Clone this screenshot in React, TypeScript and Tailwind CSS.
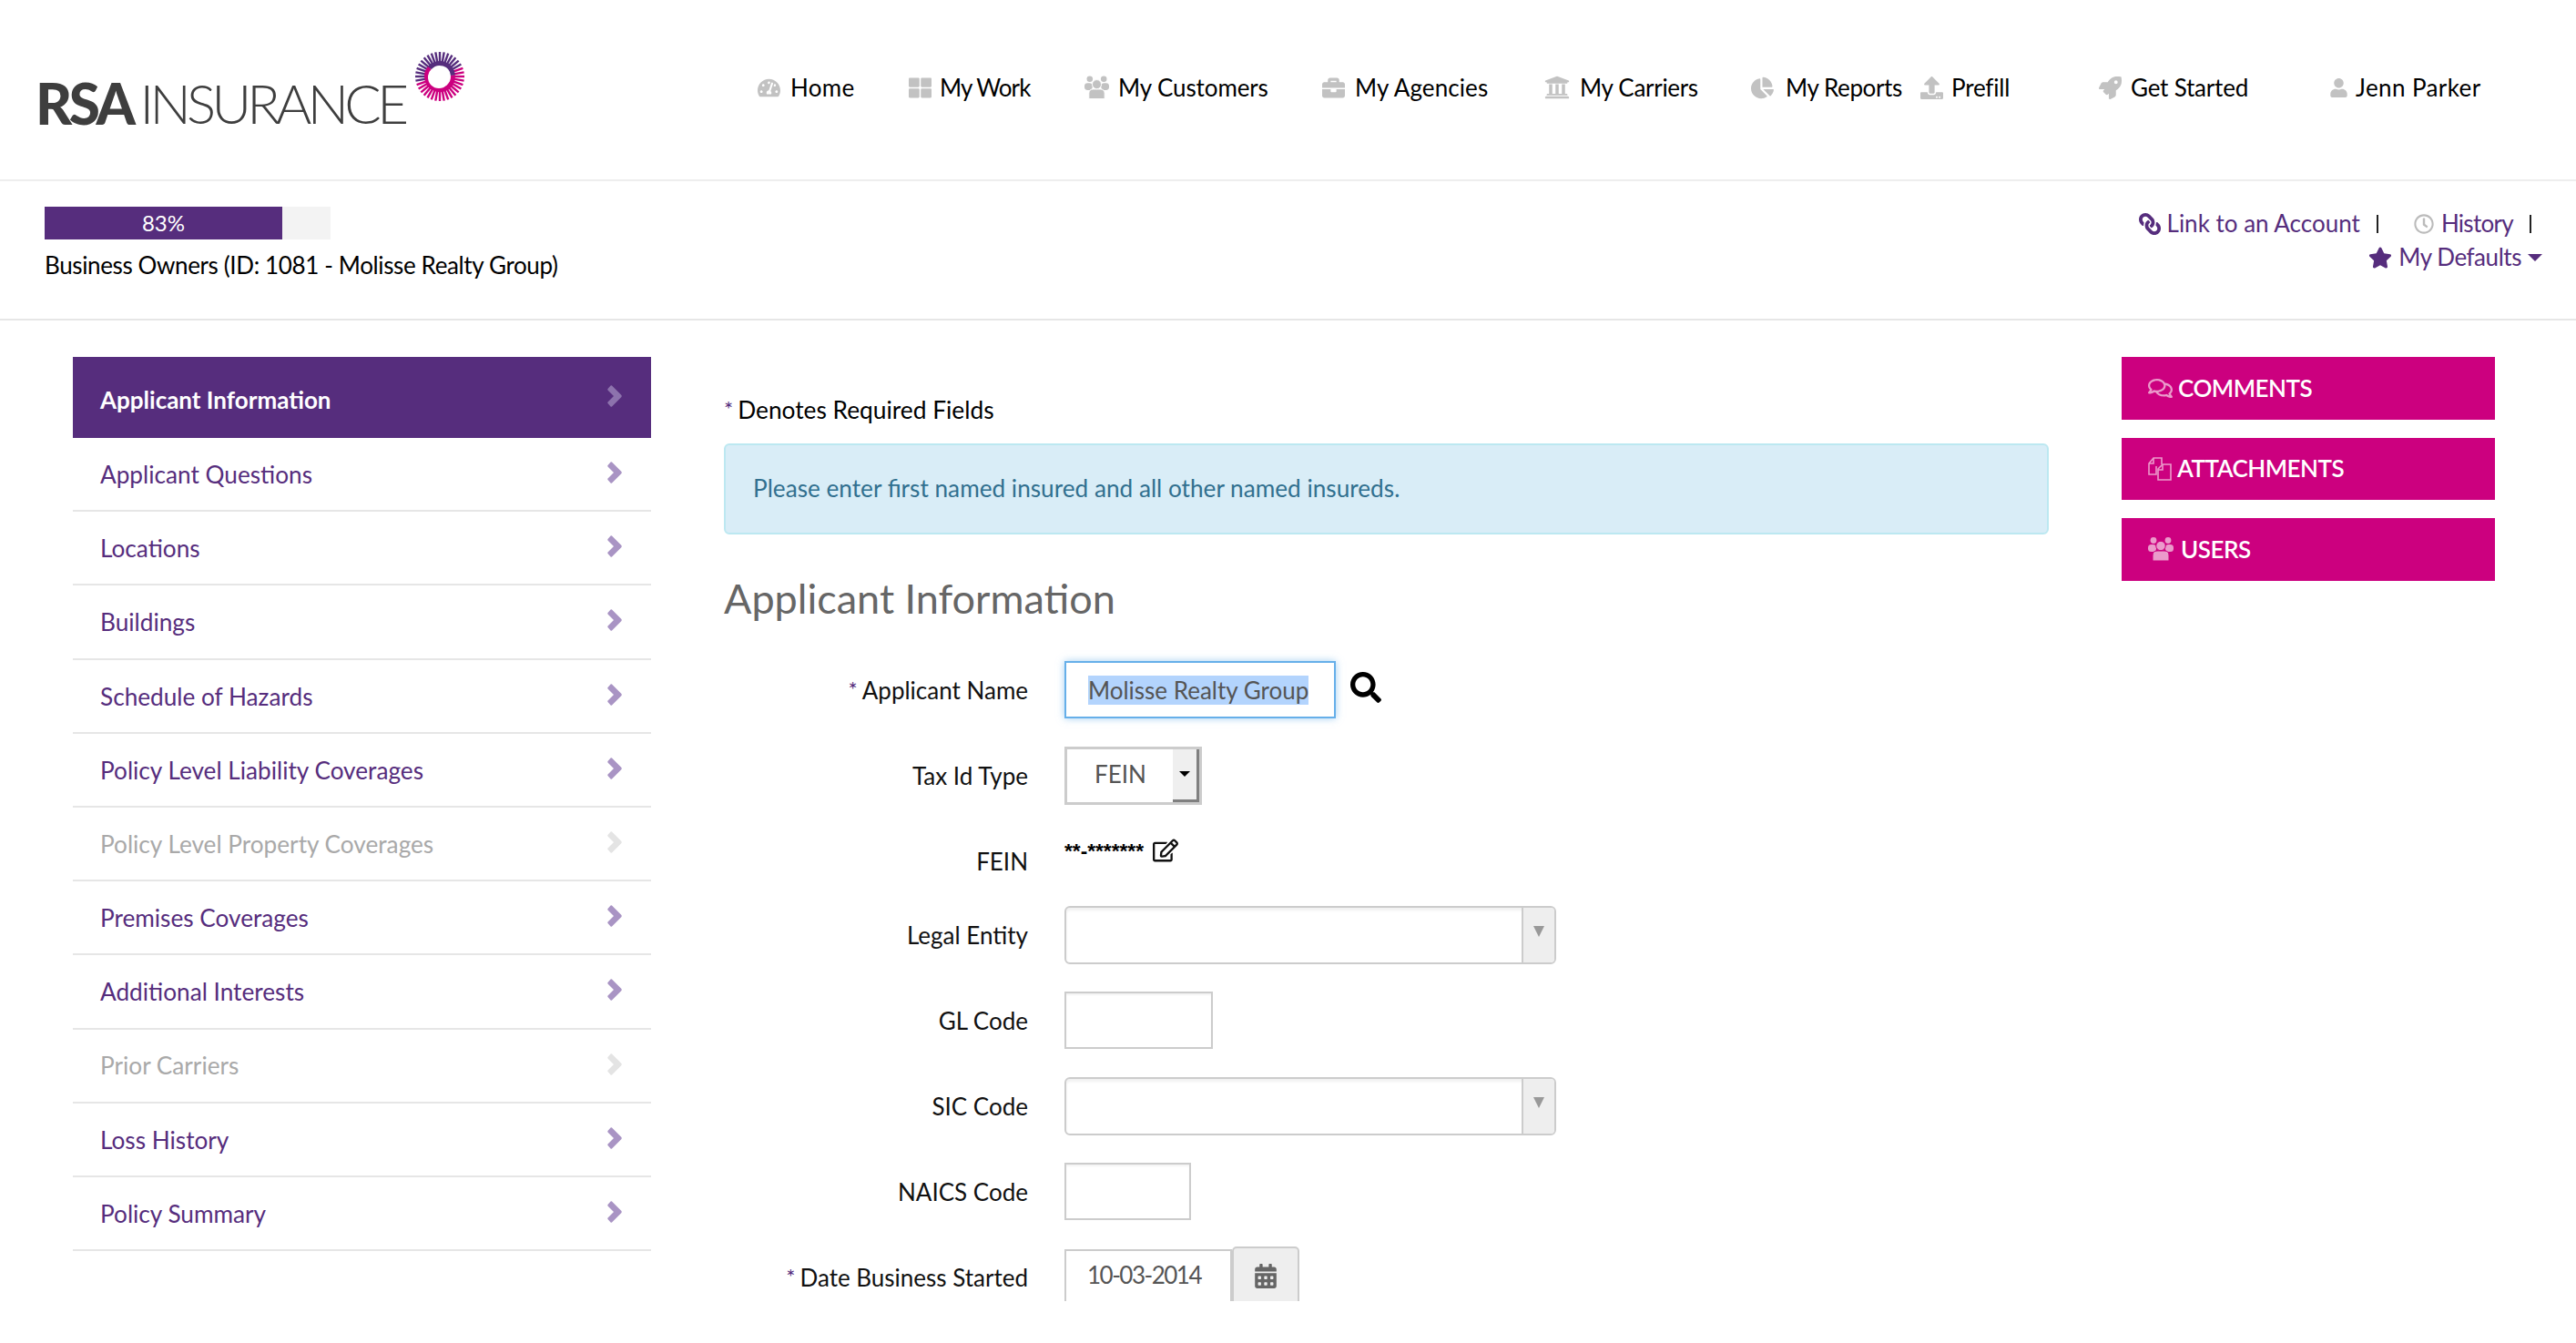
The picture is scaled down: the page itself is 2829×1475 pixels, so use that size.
import type { ReactNode } from "react";
import {
  FaTachometerAlt,
  FaThLarge,
  FaBriefcase,
  FaUniversity,
  FaChartPie,
  FaUpload,
  FaRocket,
  FaUser,
  FaLink,
  FaRegClock,
  FaStar,
  FaSearch,
  FaRegEdit,
  FaRegComments,
  FaCalendarAlt,
} from "react-icons/fa";

function UsersIcon({ className, gap }: { className: string; gap: string }) {
  return (
    <svg viewBox="0 0 28 26" className={className} fill="currentColor">
      <circle cx="6" cy="3.5" r="3.4" />
      <circle cx="22" cy="3.5" r="3.4" />
      <rect x="0" y="8" width="9" height="8" rx="3.5" />
      <rect x="19" y="8" width="9" height="8" rx="3.5" />
      <path d="M5 26 V20 Q5 15 10 15 H18 Q23 15 23 20 V26 Z" stroke={gap} strokeWidth="1" />
      <circle cx="14" cy="9.5" r="5.2" stroke={gap} strokeWidth="1" />
    </svg>
  );
}

function NavUsers({ className }: { className?: string }) {
  return <UsersIcon className={className ?? ""} gap="#ffffff" />;
}

const navItems = [
  { label: "Home", icon: FaTachometerAlt, width: "w-[166px]", icon_cls: "w-[25px] h-[25px] mr-[11px]", track: "tracking-[0.3px]" },
  { label: "My Work", icon: FaThLarge, width: "w-[193px]", icon_cls: "w-[25px] h-[25px] mr-[9px]", track: "tracking-[-0.9px]" },
  { label: "My Customers", icon: NavUsers, width: "w-[261px]", icon_cls: "w-[27px] h-[26px] mr-[10px]", track: "tracking-[-0.1px]" },
  { label: "My Agencies", icon: FaBriefcase, width: "w-[244px]", icon_cls: "w-[25px] h-[25px] mr-[11px]", track: "tracking-[0.1px]" },
  { label: "My Carriers", icon: FaUniversity, width: "w-[227px]", icon_cls: "w-[28px] h-[28px] mr-[11px]", track: "tracking-[-0.3px]" },
  { label: "My Reports", icon: FaChartPie, width: "w-[186px]", icon_cls: "w-[25px] h-[25px] mr-[13px]", track: "tracking-[-0.4px]" },
  { label: "Prefill", icon: FaUpload, width: "w-[196px]", icon_cls: "w-[25px] h-[25px] mr-[9px]", track: "tracking-[-0.2px]" },
  { label: "Get Started", icon: FaRocket, width: "w-[253px]", icon_cls: "w-[25px] h-[25px] mr-[10px]", track: "tracking-[-0.2px]" },
  { label: "Jenn Parker", icon: FaUser, width: "w-[170px]", icon_cls: "w-[21px] h-[21px] mr-[8px]", track: "tracking-[0.4px]" },
];

const sideItems = [
  { label: "Applicant Questions" },
  { label: "Locations" },
  { label: "Buildings" },
  { label: "Schedule of Hazards" },
  { label: "Policy Level Liability Coverages" },
  { label: "Policy Level Property Coverages", disabled: true },
  { label: "Premises Coverages" },
  { label: "Additional Interests" },
  { label: "Prior Carriers", disabled: true },
  { label: "Loss History" },
  { label: "Policy Summary" },
];

function LogoMark() {
  const rays = Array.from({ length: 36 }, (_, i) => (i * 360) / 36);
  return (
    <svg viewBox="-28 -28 56 56" className="w-[56px] h-[56px]">
      {rays.map((deg) => {
        const rad = (deg * Math.PI) / 180;
        const purple = deg >= 255 || deg < 70;
        return (
          <line
            key={deg}
            x1={Math.sin(rad) * 14}
            y1={-Math.cos(rad) * 14}
            x2={Math.sin(rad) * 27}
            y2={-Math.cos(rad) * 27}
            stroke={purple ? "#562d7d" : "#cc007f"}
            strokeWidth="2.4"
          />
        );
      })}
      <path d="M-11.1 -9.3 A14.5 14.5 0 0 1 14.4 -1.3" fill="none" stroke="#562d7d" strokeWidth="5" />
      <path d="M14.4 -1.3 A14.5 14.5 0 1 1 -11.1 -9.3" fill="none" stroke="#cc007f" strokeWidth="5" />
      <circle cx="-1" cy="1" r="12" fill="white" />
    </svg>
  );
}

function Chevron({ className }: { className: string }) {
  return (
    <svg viewBox="0 0 16 24" className={`w-[16px] h-[24px] ${className}`} fill="currentColor">
      <path d="M5 0.5 L15.5 11 Q16 12 15.5 13 L5 23.5 Q4.3 24 3.6 23.5 L0.5 20 Q0 19.3 0.5 18.6 L7 12 L0.5 5.4 Q0 4.7 0.5 4 L3.6 0.5 Q4.3 0 5 0.5 Z" />
    </svg>
  );
}

function AttachIcon() {
  return (
    <svg viewBox="0 0 26 26" className="w-[26px] h-[26px]" fill="none" stroke="#eb9acb" strokeWidth="1.6">
      <path d="M9 10 V19 H1 V7 L6 1 H15 V8" />
      <path d="M6 1 V7 H1" />
      <path d="M11 25 V13 L16 8 H25 V25 Z" />
      <path d="M16 8 V14 H11" />
    </svg>
  );
}

function FormRow({ label, required, children, className }: { label: string; required?: boolean; children: ReactNode; className: string }) {
  return (
    <div className={`flex items-center ${className}`}>
      <div className="w-[334px] text-right text-[26px] leading-none text-[#111] whitespace-nowrap">
        {required && <span className="text-[#562d7d] text-[24px] align-[2px] mr-[5px]">*</span>}
        {label}
      </div>
      <div className="ml-[40px] flex items-center">{children}</div>
    </div>
  );
}

function ComboBox() {
  return (
    <div className="w-[540px] h-[64px] flex rounded-[6px] border-2 border-[#ccc] bg-white shadow-[inset_0_3px_3px_rgba(0,0,0,0.06)] overflow-hidden">
      <div className="flex-1" />
      <div className="w-[36px] bg-[#eee] border-l-2 border-[#ccc] flex justify-center pt-[20px]">
        <div className="w-0 h-0 border-l-[6px] border-r-[6px] border-t-[12px] border-l-transparent border-r-transparent border-t-[#999]" />
      </div>
    </div>
  );
}

function TextBox({ width }: { width: string }) {
  return <div className={`${width} h-[63px] border-2 border-[#ccc] bg-white shadow-[inset_0_2px_2px_rgba(0,0,0,0.05)]`} />;
}

function ActionButton({ icon, label, className }: { icon: ReactNode; label: string; className: string }) {
  return (
    <div className={`w-[410px] bg-[#cc007f] flex items-center pl-[29px] pb-[1px] text-white text-[26px] tracking-[-0.5px] font-semibold ${className}`}>
      {icon}
      <span>{label}</span>
    </div>
  );
}

export default function App() {
  return (
    <div className="w-[2829px] min-h-screen bg-white font-['Lato',sans-serif] text-black overflow-hidden">
      {/* top nav */}
      <header className="h-[199px] border-b-2 border-[#eee] flex">
        <div className="w-[832px] shrink-0 flex">
          <div className="ml-[39px] w-[416px] mt-[78px] h-[70px] flex items-end text-[#3e3e3e] leading-[70px] whitespace-nowrap">
            <span className="text-[62px] font-black tracking-[-3.5px]">RSA</span>
            <span className="ml-[8px] text-[60px] font-light tracking-[-4.7px]">INSURANCE</span>
          </div>
          <div className="mt-[56px] self-start"><LogoMark /></div>
        </div>
        <nav className="flex items-start pt-[81px]">
          {navItems.map((item) => (
            <div key={item.label} className={`${item.width} h-[30px] flex items-center text-[26px] leading-[30px] whitespace-nowrap`}>
              <item.icon className={`${item.icon_cls} text-[#c2c2c2] shrink-0`} />
              <span className={item.track}>{item.label}</span>
            </div>
          ))}
        </nav>
      </header>

      {/* progress + links */}
      <div className="h-[153px] border-b-2 border-[#e6e6e6] flex justify-between pl-[49px] pr-[37px]">
        <div className="pt-[28px]">
          <div className="w-[314px] h-[36px] bg-[#f3f3f3] flex">
            <div className="w-[261px] bg-[#562d7d] text-white text-[24px] leading-[36px] text-center">83%</div>
          </div>
          <div className="mt-[11px] text-[26px] leading-[34px] tracking-[-0.37px] whitespace-nowrap">Business Owners (ID: 1081 - Molisse Realty Group)</div>
        </div>
        <div className="pt-[28px] flex flex-col items-end text-[#562d7d] text-[26px] leading-[37px]">
          <div className="flex items-center whitespace-nowrap">
            <FaLink className="w-[24px] h-[24px] mr-[7px] -scale-x-100" />
            <span>Link to an Account</span>
            <span className="ml-[18px] w-[2px] h-[20px] bg-[#222]" />
            <FaRegClock className="ml-[39px] w-[22px] h-[22px] mr-[8px] text-[#bbb]" />
            <span className="tracking-[-0.7px]">History</span>
            <span className="ml-[18px] w-[2px] h-[20px] bg-[#222]" />
            <span className="w-[12px]" />
          </div>
          <div className="flex items-center whitespace-nowrap">
            <FaStar className="w-[26px] h-[26px] mr-[7px]" />
            <span className="tracking-[-0.45px]">My Defaults</span>
            <span className="ml-[7px] w-0 h-0 border-l-[8px] border-r-[8px] border-t-[8px] border-l-transparent border-r-transparent border-t-[#562d7d]" />
          </div>
        </div>
      </div>

      {/* main */}
      <main className="h-[1077px] overflow-hidden flex pt-[40px] pl-[80px]">
        <aside className="w-[635px] shrink-0">
          <div className="h-[89px] bg-[#562d7d] flex items-center justify-between pl-[30px] pr-[32px] text-white text-[26px] font-bold">
            <span className="mt-[6px]">Applicant Information</span>
            <Chevron className="text-[#8d73ad] -mt-[3px]" />
          </div>
          {sideItems.map((item) => (
            <div
              key={item.label}
              className={`h-[81.2px] border-b-2 border-[#e6e6e6] flex items-center justify-between pl-[30px] pr-[32px] text-[26.2px] ${item.disabled ? "text-[#a9a9a9]" : "text-[#562d7d]"}`}
            >
              <span className="mt-[2px]">{item.label}</span>
              <Chevron className={`-mt-[3px] ${item.disabled ? "text-[#e4e4e4]" : "text-[#a994c4]"}`} />
            </div>
          ))}
        </aside>

        <section className="w-[1455px] shrink-0 ml-[80px]">
          <div className="mt-[42px] h-[30px] text-[26.3px] leading-[30px] whitespace-nowrap">
            <span className="text-[#562d7d] text-[24px] align-[2px] mr-[5px]">*</span>Denotes Required Fields
          </div>
          <div className="mt-[23px] h-[100px] rounded-[6px] border-2 border-[#bce8f1] bg-[#d9edf7] flex items-center pl-[30px] text-[26.2px] text-[#31708f]">
            Please enter first named insured and all other named insureds.
          </div>
          <h1 className="mt-[40px] h-[60px] text-[45px] leading-[60px] text-[#666]">Applicant Information</h1>

          <div className="mt-[39px]">
            <FormRow label="Applicant Name" required className="h-[63px]">
              <div className="w-[298px] h-[63px] border-2 border-[#66afe9] shadow-[0_0_8px_rgba(102,175,233,0.6)] flex items-center pl-[24px] text-[26px] text-[#555]">
                <span className="bg-[#b3d4fd] leading-[32px]">Molisse Realty Group</span>
              </div>
              <FaSearch className="ml-[16px] -mt-[6px] w-[34px] h-[34px] text-black" />
            </FormRow>

            <FormRow label="Tax Id Type" className="h-[64px] mt-[31px]">
              <div className="w-[151px] h-[64px] border-[3px] border-[#ccc] flex text-[26px] text-[#555]">
                <div className="flex-1 pl-[30px] leading-[54px]">FEIN</div>
                <div className="w-[29px] bg-[#efefef] border-r-[3px] border-b-[3px] border-[#808080] flex justify-center pt-[24px]">
                  <div className="w-0 h-0 border-l-[6px] border-r-[6px] border-t-[6px] border-l-transparent border-r-transparent border-t-black" />
                </div>
              </div>
            </FormRow>

            <FormRow label="FEIN" className="h-[30px] mt-[47px]">
              <div className="-mt-[24px] flex items-center">
                <span className="text-[22.7px] font-['Liberation_Sans',sans-serif] font-bold leading-[30px]">**-*******</span>
                <FaRegEdit className="ml-[10px] w-[28px] h-[28px] text-[#111]" />
              </div>
            </FormRow>

            <FormRow label="Legal Entity" className="h-[64px] mt-[34px]">
              <ComboBox />
            </FormRow>
            <FormRow label="GL Code" className="h-[63px] mt-[30px]">
              <TextBox width="w-[163px]" />
            </FormRow>
            <FormRow label="SIC Code" className="h-[64px] mt-[31px]">
              <ComboBox />
            </FormRow>
            <FormRow label="NAICS Code" className="h-[63px] mt-[30px]">
              <TextBox width="w-[139px]" />
            </FormRow>
            <div className="flex items-start mt-[29px]">
              <div className="w-[334px] mt-[18px] text-right text-[26px] leading-[30px] text-[#111] whitespace-nowrap">
                <span className="text-[#562d7d] text-[24px] align-[2px] mr-[5px]">*</span>Date Business Started
              </div>
              <div className="ml-[40px] flex items-start">
                <div className="mt-[3px] w-[184px] h-[70px] border-2 border-[#ccc] pl-[23px] pt-[11px] text-[26px] leading-[30px] tracking-[-1.5px] text-[#555]">10-03-2014</div>
                <div className="w-[74px] h-[80px] bg-[#eee] border-2 border-[#ccc] rounded-t-[5px] flex justify-center pt-[17px]">
                  <FaCalendarAlt className="w-[24px] h-[27px] text-[#666]" />
                </div>
              </div>
            </div>
          </div>
        </section>

        <aside className="ml-[80px] w-[410px] shrink-0">
          <ActionButton
            className="h-[69px]"
            label="COMMENTS"
            icon={<FaRegComments className="w-[27px] h-[27px] text-[#eb9acb] mr-[6px]" />}
          />
          <ActionButton
            className="h-[68px] mt-[20px]"
            label="ATTACHMENTS"
            icon={<span className="mr-[6px] flex"><AttachIcon /></span>}
          />
          <ActionButton
            className="h-[69px] mt-[20px]"
            label="USERS"
            icon={<UsersIcon className="w-[28px] h-[26px] text-[#eb9acb] mr-[8px]" gap="#cc007f" />}
          />
        </aside>
      </main>
    </div>
  );
}
